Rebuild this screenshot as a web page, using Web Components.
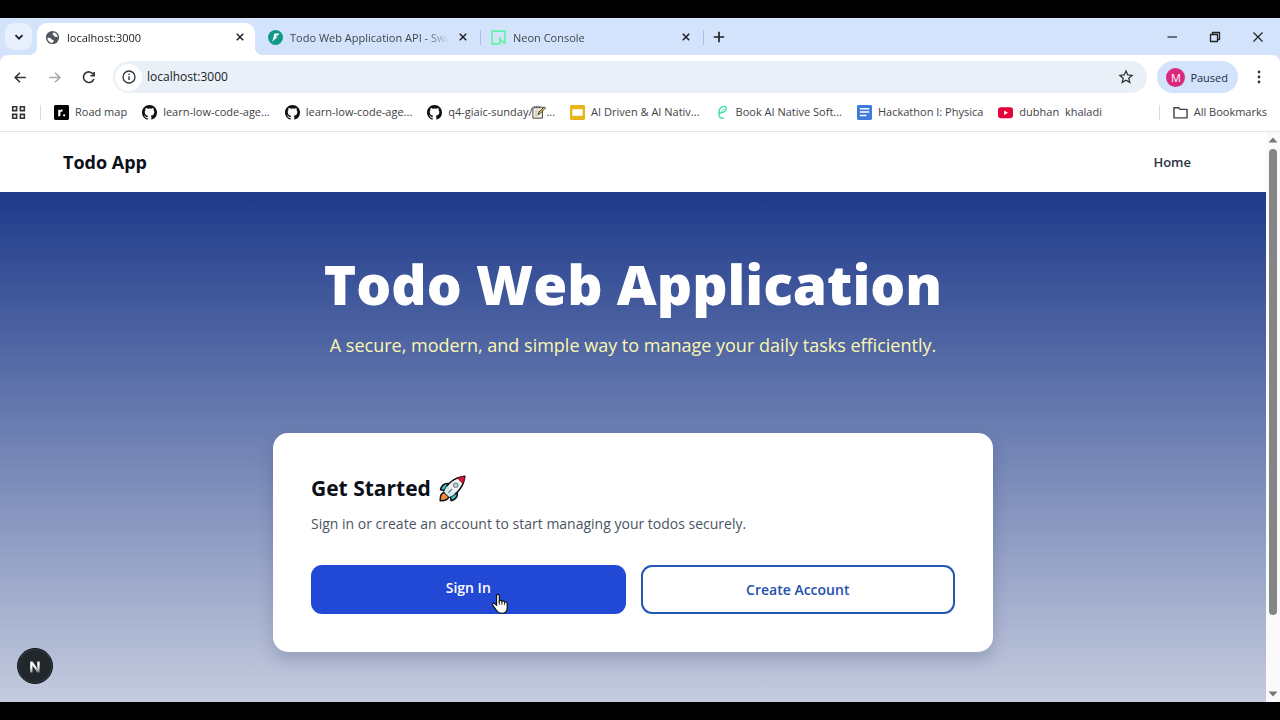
<!DOCTYPE html>
<html lang="en">
<head>
<meta charset="utf-8">
<meta name="viewport" content="width=device-width, initial-scale=1">
<title>Todo Web Application</title>
<style>
  html, body { height: 100%; margin: 0; }
  body {
    background: #000;
    color: #1f2328;
    font-family: "Open Sans", "Noto Sans", sans-serif;
  }
</style>
</head>
<body>
<browser-window></browser-window>

<script>
const ICONS = {
  chevron: '<path d="M4.500 6.200 8 9.700l3.500-3.500" fill="none" stroke="currentColor" stroke-width="1.800"/>',
  globe: '<circle cx="8" cy="8" r="7" fill="#50555b"/><path d="M2.600 8.400c1.800-.5 3.600.2 4.400 1.400.8.9 2.200.5 2.400 1.600.1 1-1 1.300-1.500 2.500C5 13.500 2.700 11.400 2.600 8.400ZM9 2.300c.6 1-.9 1.200-1 2.300 0 .8 1.500.5 1.700 1.500.2 1.200 1.200 1.400 2 1.100.8-.2 1.500.3 1.900.8.1-2.700-1.900-5.100-4.600-5.700Z" fill="#fff"/>',
  close: '<path d="m4.300 4.300 7.400 7.400m0-7.400-7.400 7.400" fill="none" stroke="currentColor" stroke-width="1.700"/>',
  bolt: '<circle cx="8" cy="8" r="8" fill="#109989"/><path d="M6.800 3.700h5.400l-1.600 2.200H8.900l-.5 1.300h1.900L4.400 12.500l1.100-3.400Z" fill="#fff"/>',
  neon: '<path d="M14.800 14.500V1.200H1.200v13.600h8.300V9.200l5.200 5.300" fill="none" stroke="#63f3a4" stroke-width="1.800"/>',
  plus: '<path d="M8 2.800v10.400M2.800 8h10.400" fill="none" stroke="currentColor" stroke-width="1.700"/>',
  minimize: '<path d="M3.500 8h9.500" stroke="currentColor" stroke-width="1.200"/>',
  restore: '<path d="M3.500 5.500h7v7h-7ZM5.500 5.500v-2h7v7h-2" fill="none" stroke="currentColor" stroke-width="1.300" stroke-linejoin="round"/>',
  exit: '<path d="m3.500 3.500 9 9m0-9-9 9" stroke="currentColor" stroke-width="1.200"/>',
  back: '<path d="M13 8H3m4.500-4.500L3 8l4.500 4.500" fill="none" stroke="currentColor" stroke-width="1.500"/>',
  forward: '<path d="M3 8h10M8.500 3.500 13 8l-4.500 4.500" fill="none" stroke="currentColor" stroke-width="1.500"/>',
  reload: '<path d="M12.600 5.200A5 5 0 1 0 13 9.300M13.300 2.800v3.500H9.800" fill="none" stroke="currentColor" stroke-width="1.500"/>',
  info: '<circle cx="8" cy="8" r="6" fill="none" stroke="currentColor" stroke-width="1.300"/><path d="M8 7.200v3.800M8 4.800v1.300" stroke="currentColor" stroke-width="1.400"/>',
  star: '<path d="m8 2 1.800 4 4.300.4-3.300 2.800 1 4.200L8 11.200l-3.800 2.200 1-4.200-3.300-2.800L6.200 6Z" fill="none" stroke="currentColor" stroke-width="1.300"/>',
  dots: '<g fill="currentColor"><circle cx="8" cy="3" r="1.400"/><circle cx="8" cy="8" r="1.400"/><circle cx="8" cy="13" r="1.400"/></g>',
  apps: '<path d="M1.800 1.800H6V6H1.800Zm8.200 0h4.200V6H10ZM1.800 10H6v4.200H1.800Zm8.200 0h4.200v4.200H10Z" fill="none" stroke="currentColor" stroke-width="1.700"/>',
  roadmap: '<rect width="16" height="16" rx="1.500" fill="#000"/><path d="M4.500 12V5h2v1c.5-.8 1.300-1.200 2.700-1.100v2C7.500 6.800 6.800 7.400 6.800 9v3Z" fill="#fff"/><circle cx="10.800" cy="11" r="1.200" fill="#fff"/>',
  github: '<path fill="#111" d="M8 0C3.580 0 0 3.580 0 8c0 3.540 2.290 6.530 5.470 7.590.4.070.55-.17.55-.38 0-.19-.010-.82-.010-1.490-2.010.37-2.530-.49-2.690-.94-.09-.23-.48-.94-.82-1.130-.28-.15-.68-.52-.010-.53.63-.010 1.080.58 1.230.82.72 1.210 1.870.87 2.330.66.070-.52.28-.87.51-1.070-1.780-.2-3.640-.89-3.640-3.950 0-.87.31-1.590.82-2.150-.08-.2-.36-1.020.08-2.120 0 0 .67-.21 2.200.82A7.700 7.700 0 0 1 8 3.860c.68 0 1.360.09 2 .27 1.530-1.040 2.200-.82 2.200-.82.44 1.100.16 1.920.08 2.120.51.56.82 1.270.82 2.150 0 3.070-1.870 3.750-3.650 3.950.29.25.54.73.54 1.480 0 1.070-.010 1.930-.010 2.200 0 .21.15.46.55.38A8.010 8.010 0 0 0 16 8c0-4.420-3.580-8-8-8Z"/>',
  memo: '<path d="M1 2.500h11v12.500H1Z" fill="#f2efdf" stroke="#444" stroke-width="1.100"/><path d="M3 1v3m2-3v3m2-3v3m2-3v3" stroke="#555" stroke-width=".9"/><path d="M3.500 7H8M3.500 9.500h3.500M3.500 12h3" stroke="#999" stroke-width=".8"/><path d="m7 11 1-3 6-6 1.500 1.500-6 6Z" fill="#efb64a" stroke="#222" stroke-width=".9"/>',
  slides: '<rect width="16" height="16" rx="1.500" fill="#e8b416"/><path d="M2.500 4.500h11v7h-11Z" fill="#fff"/>',
  book: '<path d="M4.500 8.600c3.500.2 7.200-1.900 7.400-4.700.1-2.100-2.100-3-4.200-2C5 3.200 3.900 6.500 4.200 10c.3 3.400 2 5 5.200 3.800" fill="none" stroke="#42dfa3" stroke-width="1.500"/><path d="M6.500 7.500 10 4" stroke="#42dfa3"/>',
  docs: '<rect width="16" height="16" rx="1.500" fill="#3f7bdc"/><path d="M3 4h10M3 7.500h10M3 11.300h7" stroke="#fff" stroke-width="1.600"/>',
  youtube: '<rect y="2.500" width="16" height="11.500" rx="3" fill="#e4003a"/><path d="m6.500 5.800 4.200 2.400-4.200 2.400Z" fill="#fff"/>',
  folder: '<path d="M1 3h5l1.500 1.700H15v9H1Z" fill="none" stroke="currentColor" stroke-width="1.500" stroke-linejoin="round"/>',
  up: '<path d="m3.500 10.500 4.500-5 4.500 5Z" fill="#777"/>',
  down: '<path d="m3.500 5.500 4.500 5 4.500-5Z" fill="#777"/>',
  rocket: '<path d="M5.600 5.100C3.200 4.900 1.500 6 .9 8.800l3 .6ZM10.900 10.400c.2 2.400-.9 4.200-3.700 4.800l-.6-3Z" fill="#42bfd2" stroke="#111" stroke-width=".9" stroke-linejoin="round"/><path d="M3.300 10.200C1.300 10.600.6 12.500.7 15.300c2.800.1 4.700-.6 5.100-2.600Z" fill="#f08a3c" stroke="#111" stroke-width=".9" stroke-linejoin="round"/><path d="M3 10C4.300 5.800 8.600 1.300 15.300.7c-.6 6.700-5.100 11-9.300 12.300Z" fill="#f0f4f5" stroke="#111" stroke-width=".9" stroke-linejoin="round"/><path d="M10.900 1.900c1.300-.6 2.800-1 4.400-1.200-.2 1.600-.6 3.100-1.200 4.400Z" fill="#d51935" stroke="#6d1020" stroke-width=".4"/><path d="M3 10c.4-1.300 1-2.300 1.800-3.400l4.600 4.600c-1.100.8-2.100 1.400-3.400 1.800Z" fill="#cfeaf0"/><circle cx="9.900" cy="6.100" r="1.300" fill="#c9d2d8" stroke="#7d8991" stroke-width=".7"/><path d="m5.600 10.400 2.200-2.200" stroke="#65727c" stroke-width=".7"/>',
  hand: '<path d="M5 9.300V2.200c0-1.600 2.100-1.600 2.100 0v3.900c.5-.8 1.900-.6 2 .3.600-.6 1.900-.4 2 .5.800-.5 2 0 2 1.100v3.200c0 2.800-1.400 4.300-4 4.300-2.400 0-3.500-.9-4.600-2.900L2 9.200c-.6-1.200 1-1.900 1.800-.9Z" fill="#fff" stroke="#111" stroke-width=".9"/><path d="M7.100 6v3M9.100 6.500V9M11.100 7v2" stroke="#111" stroke-width=".7"/>'
};

class UiIcon extends HTMLElement {
  constructor() {
    super();
    this.attachShadow({ mode: 'open' });
  }

  connectedCallback() {
    this.shadowRoot.innerHTML = `
      <style>
        :host { display: inline-flex; flex: none; width: var(--size, 16px); height: var(--size, 16px); }
        svg { width: 100%; height: 100%; overflow: visible; }
      </style>
      <svg viewBox="0 0 16 16" aria-hidden="true">${ICONS[this.getAttribute('name')] || ''}</svg>
    `;
  }
}

class BrowserTab extends HTMLElement {
  constructor() {
    super();
    this.attachShadow({ mode: 'open' });
  }

  connectedCallback() {
    this.shadowRoot.innerHTML = `
      <style>
        :host {
          position: relative;
          box-sizing: border-box;
          display: flex;
          flex: 1;
          min-width: 0;
          align-items: center;
          gap: 7px;
          height: 32px;
          padding: 0 8px 4px;
          color: #40454c;
          font-size: 11px;
        }
        :host([active]) {
          background: #fff;
          color: #202124;
          border-radius: 10px 10px 0 0;
        }
        :host([active])::before, :host([active])::after {
          content: "";
          position: absolute;
          bottom: 0;
          width: 8px;
          height: 8px;
        }
        :host([active])::before { right: 100%; background: radial-gradient(circle at 0 0, transparent 8px, #fff 8px); }
        :host([active])::after { left: 100%; background: radial-gradient(circle at 100% 0, transparent 8px, #fff 8px); }
        .title {
          flex: 1;
          overflow: hidden;
          white-space: nowrap;
          mask-image: linear-gradient(90deg, #000 calc(100% - 24px), transparent);
        }
        button { display: flex; padding: 0; border: 0; background: none; color: #202124; }
      </style>
      <ui-icon name="${this.getAttribute('icon')}" style="--size: 15px"></ui-icon>
      <span class="title"><slot></slot></span>
      <button type="button" aria-label="Close tab"><ui-icon name="close" style="--size: 14px"></ui-icon></button>
    `;
  }
}

class TabStrip extends HTMLElement {
  constructor() {
    super();
    this.attachShadow({ mode: 'open' });
    this.shadowRoot.innerHTML = `
      <style>
        :host { display: flex; align-items: center; height: 37px; padding: 0 14px 0 5px; background: #d3e3fb; }
        button { display: flex; align-items: center; justify-content: center; padding: 0; border: 0; background: none; color: #202124; }
        .search { flex: none; width: 27px; height: 27px; margin-right: 5px; border-radius: 9px; background: #e8f0fd; }
        .tabs { display: flex; flex: 0 1 669px; min-width: 0; align-items: flex-end; align-self: flex-end; }
        .tabs i { flex: none; width: 1px; height: 15px; margin: 0 2px 10px; background: #a8bfe6; }
        .tabs i.hidden { background: none; }
        .new { margin-left: 5px; }
        .controls { display: flex; gap: 27px; margin-left: auto; }
      </style>
      <button class="search" type="button" aria-label="Search tabs"><ui-icon name="chevron"></ui-icon></button>
      <div class="tabs">
        <browser-tab icon="globe" active>localhost:3000</browser-tab><i class="hidden"></i>
        <browser-tab icon="bolt">Todo Web Application API - Swa</browser-tab><i></i>
        <browser-tab icon="neon">Neon Console</browser-tab><i></i>
      </div>
      <button class="new" type="button" aria-label="New tab"><ui-icon name="plus"></ui-icon></button>
      <div class="controls">
        <button type="button" aria-label="Minimize"><ui-icon name="minimize"></ui-icon></button>
        <button type="button" aria-label="Restore"><ui-icon name="restore"></ui-icon></button>
        <button type="button" aria-label="Close"><ui-icon name="exit"></ui-icon></button>
      </div>
    `;
  }
}

class AddressToolbar extends HTMLElement {
  constructor() {
    super();
    this.attachShadow({ mode: 'open' });
    this.shadowRoot.innerHTML = `
      <style>
        :host { display: block; background: #d3e3fb; }
        .bar {
          display: flex;
          align-items: center;
          gap: 10px;
          padding: 6px 13px 6px 12px;
          background: #fff;
          border-radius: 8px 8px 0 0;
        }
        button { display: flex; align-items: center; padding: 0; border: 0; background: none; color: #303438; font: inherit; }
        button:disabled { color: #a5a8ab; }
        .nav { display: flex; gap: 17px; padding-right: 6px; }
        .omnibox {
          display: flex;
          flex: 1;
          align-items: center;
          box-sizing: border-box;
          height: 32px;
          padding: 0 13px 0 2px;
          border-radius: 16px;
          background: #e9f0f8;
        }
        .site { justify-content: center; width: 27px; height: 27px; border-radius: 50%; background: #fff; }
        input {
          flex: 1;
          min-width: 0;
          padding: 0 5px;
          border: 0;
          outline: 0;
          background: none;
          color: #202124;
          font: 12px/18px "Open Sans", sans-serif;
        }
        .profile {
          gap: 5px;
          height: 32px;
          padding: 0 10px 0 9px;
          border-radius: 16px;
          background: #d3e3fb;
          color: #1c2b45;
          font-size: 11px;
          font-weight: 500;
        }
        .avatar {
          width: 19px;
          height: 19px;
          border-radius: 50%;
          background: #d9297f;
          color: #fff;
          line-height: 19px;
          text-align: center;
        }
        .menu { margin-left: 3px; }
      </style>
      <div class="bar">
        <div class="nav">
          <button type="button" aria-label="Back"><ui-icon name="back" style="--size: 17px"></ui-icon></button>
          <button type="button" aria-label="Forward" disabled><ui-icon name="forward" style="--size: 17px"></ui-icon></button>
          <button type="button" aria-label="Reload"><ui-icon name="reload" style="--size: 17px"></ui-icon></button>
        </div>
        <div class="omnibox">
          <button class="site" type="button" aria-label="Site information"><ui-icon name="info"></ui-icon></button>
          <input type="text" value="localhost:3000" aria-label="Address">
          <button type="button" aria-label="Bookmark this page"><ui-icon name="star"></ui-icon></button>
        </div>
        <button class="profile" type="button"><span class="avatar">M</span><span>Paused</span></button>
        <button class="menu" type="button" aria-label="Menu"><ui-icon name="dots"></ui-icon></button>
      </div>
    `;
  }
}

class BookmarkLink extends HTMLElement {
  constructor() {
    super();
    this.attachShadow({ mode: 'open' });
  }

  connectedCallback() {
    this.shadowRoot.innerHTML = `
      <style>
        :host { display: block; flex: none; }
        a { display: flex; align-items: center; gap: 6px; color: #3d4247; font-size: 11px; line-height: 16px; text-decoration: none; white-space: pre; }
        span { display: flex; align-items: center; }
      </style>
      <a href="#"><ui-icon name="${this.getAttribute('icon')}" style="--size: 15px"></ui-icon><span><slot></slot></span></a>
    `;
  }
}

class BookmarksBar extends HTMLElement {
  constructor() {
    super();
    this.attachShadow({ mode: 'open' });
    this.shadowRoot.innerHTML = `
      <style>
        :host {
          display: flex;
          align-items: center;
          padding: 5px 13px 11px 11px;
          border-bottom: 1px solid #e4e6e8;
          background: #fff;
        }
        button { display: flex; padding: 0; border: 0; background: none; color: #303438; }
        i { flex: none; width: 1px; height: 15px; margin: 0 13px 0 14px; background: #cfdcf0; }
        .links { display: flex; flex: 1; gap: 15px; min-width: 0; overflow: hidden; }
      </style>
      <button type="button" aria-label="Apps"><ui-icon name="apps" style="--size: 15px"></ui-icon></button>
      <i></i>
      <div class="links">
        <bookmark-link icon="roadmap">Road map</bookmark-link>
        <bookmark-link icon="github">learn-low-code-age...</bookmark-link>
        <bookmark-link icon="github">learn-low-code-age...</bookmark-link>
        <bookmark-link icon="github">q4-giaic-sunday/<ui-icon name="memo" style="--size: 14px"></ui-icon>...</bookmark-link>
        <bookmark-link icon="slides">AI Driven &amp; AI Nativ...</bookmark-link>
        <bookmark-link icon="book">Book AI Native Soft...</bookmark-link>
        <bookmark-link icon="docs">Hackathon I: Physica</bookmark-link>
        <bookmark-link icon="youtube">dubhan  khaladi</bookmark-link>
      </div>
      <i></i>
      <bookmark-link icon="folder">All Bookmarks</bookmark-link>
    `;
  }
}

class SiteHeader extends HTMLElement {
  constructor() {
    super();
    this.attachShadow({ mode: 'open' });
    this.shadowRoot.innerHTML = `
      <style>
        :host { display: block; background: #fff; }
        header {
          display: flex;
          align-items: center;
          justify-content: space-between;
          box-sizing: border-box;
          max-width: 1140px;
          height: 60px;
          margin: 0 auto;
        }
        a { color: #0c1119; text-decoration: none; }
        .brand { font-size: 18px; font-weight: 700; }
        nav { padding-bottom: 2px; }
        nav a { padding: 8px 12px; color: #2b333f; font-size: 13px; font-weight: 600; }
      </style>
      <header>
        <a class="brand" href="#">Todo App</a>
        <nav><a href="#">Home</a></nav>
      </header>
    `;
  }
}

class ActionLink extends HTMLElement {
  constructor() {
    super();
    this.attachShadow({ mode: 'open' });
    this.shadowRoot.innerHTML = `
      <style>
        :host { display: grid; position: relative; }
        a {
          padding: 11px 20px;
          border-radius: 11px;
          background: #2149d6;
          color: #fff;
          font-size: 14px;
          font-weight: 600;
          line-height: 23px;
          text-align: center;
          text-decoration: none;
        }
        :host([outline]) a { border: 2px solid #2456b4; background: #fff; color: #2450ae; }
        ::slotted([slot="pointer"]) { position: absolute; left: 57%; top: 28px; }
      </style>
      <a href="#"><slot></slot></a>
      <slot name="pointer"></slot>
    `;
  }
}

class StartCard extends HTMLElement {
  constructor() {
    super();
    this.attachShadow({ mode: 'open' });
    this.shadowRoot.innerHTML = `
      <style>
        :host {
          display: block;
          box-sizing: border-box;
          width: 100%;
          max-width: 720px;
          padding: 38px;
          border-radius: 15px;
          background: #fff;
          box-shadow: 0 8px 16px rgba(30, 41, 80, 0.2);
        }
        h2 { display: flex; align-items: center; gap: 8px; margin: 0; color: #0b0f17; font-size: 21px; line-height: 34px; }
        p { margin: 8px 0 30px; color: #4b5563; font-size: 14px; line-height: 22px; }
        .actions { display: grid; grid-template-columns: 1fr 1fr; gap: 15px; }
      </style>
      <h2>Get Started <ui-icon name="rocket" style="--size: 27px"></ui-icon></h2>
      <p>Sign in or create an account to start managing your todos securely.</p>
      <div class="actions">
        <action-link>Sign In<ui-icon slot="pointer" name="hand" style="--size: 21px"></ui-icon></action-link>
        <action-link outline>Create Account</action-link>
      </div>
    `;
  }
}

class HeroSection extends HTMLElement {
  constructor() {
    super();
    this.attachShadow({ mode: 'open' });
    this.shadowRoot.innerHTML = `
      <style>
        :host {
          display: flex;
          flex: 1;
          flex-direction: column;
          align-items: center;
          padding: 60px 16px 40px;
          background: linear-gradient(#1e3a8a, #f3f4f6 128%);
          text-align: center;
        }
        h1 { margin: 0; color: #fff; font-size: 55px; font-weight: 800; line-height: 64px; }
        p { margin: 16px 0 75px; color: #fbf7b0; font-size: 18px; line-height: 26px; }
        start-card { text-align: left; }
      </style>
      <h1>Todo Web Application</h1>
      <p>A secure, modern, and simple way to manage your daily tasks efficiently.</p>
      <start-card></start-card>
    `;
  }
}

class DevBadge extends HTMLElement {
  constructor() {
    super();
    this.attachShadow({ mode: 'open' });
    this.shadowRoot.innerHTML = `
      <style>
        :host { display: block; }
        button {
          width: 36px;
          height: 36px;
          padding: 0;
          border: 1px solid #111820;
          border-radius: 50%;
          background: #22272b;
          box-shadow: inset 0 0 0 1px #343b45;
          color: #fff;
          font: 15px "Liberation Sans", sans-serif;
        }
        span {
          background: linear-gradient(165deg, #fff 50%, #6d7275 85%);
          background-clip: text;
          color: transparent;
          -webkit-text-stroke: 1px transparent;
        }
      </style>
      <button type="button" aria-label="Open dev tools"><span>N</span></button>
    `;
  }
}

class PageScrollbar extends HTMLElement {
  constructor() {
    super();
    this.attachShadow({ mode: 'open' });
    this.shadowRoot.innerHTML = `
      <style>
        :host { display: flex; flex: none; flex-direction: column; align-items: center; width: 14px; background: #fafafa; }
        .track { display: flex; flex: 1; flex-direction: column; padding: 1px 0; }
        .track::after { content: ""; flex: 13; }
        .thumb { flex: 86; width: 8px; border-radius: 4px; background: #858585; }
      </style>
      <ui-icon name="up"></ui-icon>
      <div class="track"><div class="thumb"></div></div>
      <ui-icon name="down"></ui-icon>
    `;
  }
}

class BrowserWindow extends HTMLElement {
  constructor() {
    super();
    this.attachShadow({ mode: 'open' });
    this.shadowRoot.innerHTML = `
      <style>
        :host { display: flex; flex-direction: column; box-sizing: border-box; min-height: 100%; padding: 18px 0; }
        .viewport { display: flex; flex: 1; }
        main { position: relative; display: flex; flex: 1; flex-direction: column; min-width: 0; }
        dev-badge { position: absolute; left: 17px; bottom: 18px; }
      </style>
      <tab-strip></tab-strip>
      <address-toolbar></address-toolbar>
      <bookmarks-bar></bookmarks-bar>
      <div class="viewport">
        <main>
          <site-header></site-header>
          <hero-section></hero-section>
          <dev-badge></dev-badge>
        </main>
        <page-scrollbar></page-scrollbar>
      </div>
    `;
  }
}

customElements.define('ui-icon', UiIcon);
customElements.define('browser-tab', BrowserTab);
customElements.define('tab-strip', TabStrip);
customElements.define('address-toolbar', AddressToolbar);
customElements.define('bookmark-link', BookmarkLink);
customElements.define('bookmarks-bar', BookmarksBar);
customElements.define('site-header', SiteHeader);
customElements.define('action-link', ActionLink);
customElements.define('start-card', StartCard);
customElements.define('hero-section', HeroSection);
customElements.define('dev-badge', DevBadge);
customElements.define('page-scrollbar', PageScrollbar);
customElements.define('browser-window', BrowserWindow);
</script>
</body>
</html>
